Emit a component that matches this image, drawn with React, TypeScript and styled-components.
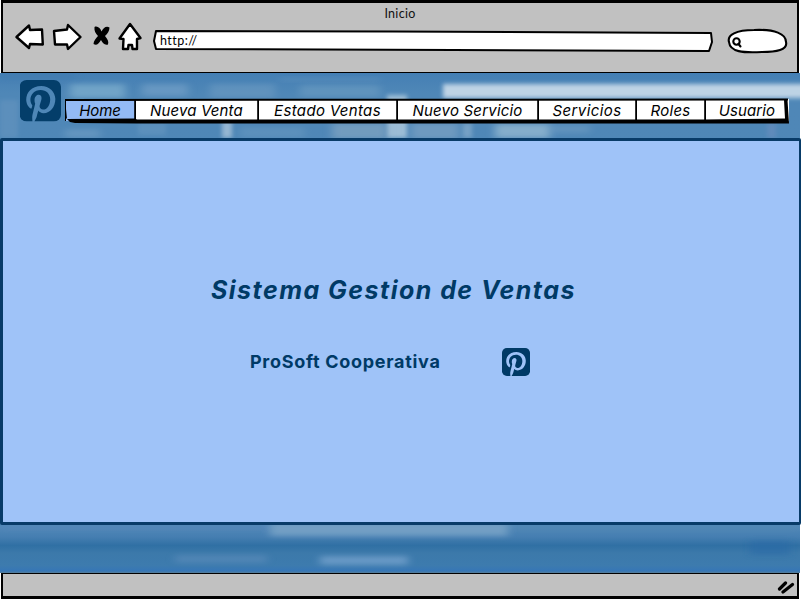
import React from "react";
import styled, { createGlobalStyle } from "styled-components";
import { FaPinterestSquare } from "react-icons/fa";

const navy = "#003a66";

const GlobalStyle = createGlobalStyle`
  * { box-sizing: border-box; }
  body { margin: 0; background: #fff; font-family: Lato, "Open Sans", sans-serif; overflow: hidden; }
`;

const Window = styled.div`
  width: 801px;
  height: 600px;
  display: flex;
  flex-direction: column;
  overflow: hidden;
`;

const Chrome = styled.header`
  flex: 0 0 73px;
  margin-right: 2px;
  margin-left: 1px;
  background: #c1c1c1;
  border: 2px solid #000;
  border-top-width: 3px;
  border-bottom-width: 1px;
  display: flex;
  flex-direction: column;
`;

const Title = styled.div`
  height: 22px;
  line-height: 21px;
  text-align: center;
  font-size: 12.5px;
  letter-spacing: 0.3px;
  color: #111;
`;

const Toolbar = styled.div`
  display: flex;
  align-items: flex-start;
  padding-left: 12px;
`;

const Controls = styled.svg`
  width: 130px;
  height: 32px;
  margin-top: -4px;
  fill: #fff;
  stroke: #000;
  stroke-width: 2.4;
  stroke-linejoin: round;
  stroke-linecap: round;
`;

const Address = styled.div`
  width: 560px;
  height: 24px;
  margin: 5px 0 0 8px;
  position: relative;
  padding-left: 7px;
  line-height: 22px;
  font-size: 12.5px;
  letter-spacing: 0.45px;
`;

const Outline = styled.svg`
  position: absolute;
  inset: 0;
  width: 100%;
  height: 100%;
  fill: #fff;
  stroke: #000;
  stroke-width: 2;
  stroke-linejoin: round;
`;

const Label = styled.span`
  position: relative;
`;

const Search = styled.svg`
  width: 62px;
  height: 26px;
  margin: 3px 0 0 14px;
  fill: #fff;
  stroke: #000;
  stroke-width: 2.1;
  stroke-linecap: round;
`;

const Page = styled.main`
  position: relative;
  flex: 0 0 500px;
  display: flex;
  flex-direction: column;
  overflow: hidden;
`;

const Photo = styled.svg`
  position: absolute;
  inset: 0;
  width: 800px;
  height: 100%;
`;

const Banner = styled.div`
  position: relative;
  height: 65px;
  display: flex;
  align-items: flex-start;
`;

const Logo = styled(FaPinterestSquare)<{ $size: number }>`
  flex: none;
  width: ${(p) => p.$size * 0.875}px;
  height: ${(p) => p.$size}px;
  clip-path: inset(6.25% 0 round ${(p) => p.$size * 0.15}px);
  color: ${navy};
`;

const BannerLogo = styled.div`
  width: 65px;
  height: 48px;
  margin-top: 4px;
  padding-left: 19.5px;
  opacity: 0.94;
`;

const Menu = styled.nav`
  position: relative;
  display: flex;
  width: 724px;
  height: 26px;
  margin-top: 25px;
`;

const MenuItem = styled.a<{ $width: number; $active?: boolean; $spacing: number }>`
  width: ${(p) => p.$width}px;
  height: 22px;
  margin-top: 1px;
  padding-right: 1px;
  border-left: 1px solid #000;
  background: ${(p) => (p.$active ? "#93baf5" : "#fff")};
  color: #000;
  text-align: center;
  font-family: Inter, sans-serif;
  font-size: 15px;
  font-style: italic;
  line-height: 23px;
  letter-spacing: ${(p) => p.$spacing}px;
  white-space: nowrap;
`;

const MenuStrokes = styled.svg`
  position: absolute;
  inset: 0;
  width: 724px;
  height: 26px;
  pointer-events: none;
`;

const Panel = styled.section`
  position: relative;
  height: 387px;
  background: #9fc3f8;
  border: 3px solid #083b68;
  border-width: 3px 2px 3px 3px;
  border-radius: 2px;
  display: flex;
  flex-direction: column;
`;

const Heading = styled.h1`
  margin: 131px 0 0 208px;
  height: 36px;
  line-height: 36px;
  font-family: Inter, sans-serif;
  font-size: 25px;
  font-weight: 700;
  font-style: italic;
  letter-spacing: 1.47px;
  white-space: nowrap;
  color: ${navy};
`;

const Company = styled.div`
  display: flex;
  align-items: center;
  margin: 38px 0 0 247px;
  height: 32px;
`;

const CompanyName = styled.h2`
  margin: -1px 0 0;
  width: 252px;
  font-family: Inter, sans-serif;
  font-size: 18px;
  font-weight: 700;
  letter-spacing: 0.7px;
  white-space: nowrap;
  color: ${navy};
`;

const StatusBar = styled.footer`
  flex: 0 0 26px;
  margin: 0 2px 0 1px;
  background: #c1c1c1;
  border: 2px solid #000;
  border-top-width: 1px;
  border-bottom-width: 3px;
  display: flex;
  justify-content: flex-end;
  align-items: center;
`;

const Grip = styled.svg`
  width: 18px;
  height: 14px;
  margin: 3px 2px 0 0;
  stroke: #000;
  stroke-width: 3.2;
  stroke-linecap: round;
`;

const items = [
  { label: "Home", width: 70, active: true, spacing: -0.1 },
  { label: "Nueva Venta", width: 123, spacing: 0.15 },
  { label: "Estado Ventas", width: 139, spacing: 0.35 },
  { label: "Nuevo Servicio", width: 141, spacing: 0.2 },
  { label: "Servicios", width: 98, spacing: 0.4 },
  { label: "Roles", width: 69, spacing: 0.3 },
  { label: "Usuario", width: 84, spacing: 0.1 },
];

// Soft light patches of the photo: x, y, width, height, colour, opacity.
const patches: [number, number, number, number, string, number][] = [
  [0, 0, 75, 7, "#3f79ae", 0.5],
  [70, 11, 55, 14, "#8dbcd5", 0.55],
  [142, 11, 46, 12, "#80a9cd", 0.5],
  [210, 11, 65, 14, "#7ba5c8", 0.4],
  [280, 5, 100, 3, "#75a0c5", 0.35],
  [300, 12, 80, 12, "#81acc9", 0.35],
  [387, 22, 20, 43, "#b8d0e1", 0.75],
  [0, 27, 18, 38, "#7ba3c8", 0.3],
  [65, 56, 35, 9, "#7ba6c9", 0.45],
  [138, 50, 28, 12, "#7ba6c9", 0.3],
  [222, 48, 10, 17, "#b4cadd", 0.7],
  [240, 54, 65, 11, "#76a3c6", 0.35],
  [332, 50, 55, 16, "#8aaac4", 0.6],
  [411, 50, 48, 16, "#8dacc8", 0.5],
  [463, 50, 9, 15, "#9dbbd4", 0.5],
  [495, 51, 55, 14, "#a9c8d9", 0.6],
  [550, 52, 40, 8, "#7da5c7", 0.4],
  [767, 50, 9, 15, "#718fbf", 0.5],
  [0, 452, 270, 5, "#5487ba", 0.8],
  [510, 452, 290, 5, "#5288b5", 0.8],
  [270, 450, 238, 13, "#8cb1cf", 0.6],
  [175, 482, 92, 8, "#6490be", 0.5],
  [320, 483, 88, 9, "#83acd5", 0.6],
  [750, 468, 40, 14, "#2868a6", 0.5],
];

export default function App() {
  return (
    <>
      <GlobalStyle />
      <Window>
        <Chrome>
          <Title>Inicio</Title>
          <Toolbar>
            <Controls viewBox="15 21 130 32">
              <path d="M16.5 37 29 25.5 30 30 42 29.5 42.8 44.5 30 44 29 48Z" />
              <path d="M54 31 67 29.5 68 25 80.5 37 68 49 67 44.5 55 44.5Z" />
              <path
                d="M94.5 27C97.5 25.5 100.5 28.5 101.5 31.5C103.5 27.5 106.5 25.5 109.5 27.5C109.5 31 107.5 34 105 36C107.5 39 109 41.5 108 44.5C104.5 45.5 102.5 43 101 40C98.5 44 96.5 46 93.5 44C93.5 41 96 38 98 36C95.5 33 94 31 94.5 27Z"
                fill="#000"
                stroke="none"
              />
              <path d="M119.5 38.5 130 24 140.5 38 137 39 137 49 132.5 49 132 45 128.5 45 128 49 123 49 123.5 39Z" />
            </Controls>
            <Address>
              <Outline viewBox="0 0 560 24">
                <path d="M3 1 240 1.5 558 3 559 12 556 21 300 20 3 19 1 11Z" />
              </Outline>
              <Label>http://</Label>
            </Address>
            <Search viewBox="727 28 62 26">
              <path d="M729 42C727 35 736 30 754 30C775 29 786 34 786 42C788 50 776 52 762 52C743 53 730 52 729 42Z" />
              <circle cx="736.5" cy="41.5" r="3.2" />
              <path d="M738.5 44 740.5 46.5" />
            </Search>
          </Toolbar>
        </Chrome>
        <Page>
          <Photo viewBox="0 0 800 500" preserveAspectRatio="none">
            <defs>
              <linearGradient id="sky" x2="0" y2="1">
                <stop offset="0" stopColor="#447fb4" />
                <stop offset=".04" stopColor="#4f87b7" />
                <stop offset=".91" stopColor="#4f86b6" />
                <stop offset=".928" stopColor="#457eb1" />
                <stop offset=".945" stopColor="#3070a4" />
                <stop offset=".96" stopColor="#3c79aa" />
                <stop offset=".985" stopColor="#3d7bae" />
                <stop offset=".996" stopColor="#3676b6" />
                <stop offset="1" stopColor="#567d98" />
              </linearGradient>
              <filter id="soft" x="-20%" y="-50%" width="140%" height="200%">
                <feGaussianBlur stdDeviation="4 2.5" />
              </filter>
              <filter id="crisp" x="-50%" y="-50%" width="200%" height="200%">
                <feGaussianBlur stdDeviation="2 2" />
              </filter>
            </defs>
            <rect width="800" height="500" fill="url(#sky)" />
            {patches.map(([x, y, w, h, fill, opacity], i) => (
              <rect key={i} x={x} y={y} width={w} height={h} fill={fill} opacity={opacity} filter={w < 30 ? "url(#crisp)" : "url(#soft)"} />
            ))}
            <rect x="443" y="11" width="370" height="14" fill="#cadceb" opacity=".9" filter="url(#crisp)" />
          </Photo>
          <Banner>
            <BannerLogo>
              <Logo $size={47.5} />
            </BannerLogo>
            <Menu>
              {items.map((item) => (
                <MenuItem key={item.label} $width={item.width} $active={item.active} $spacing={item.spacing}>
                  {item.label}
                </MenuItem>
              ))}
              <MenuStrokes viewBox="0 0 724 26">
                <path d="M0 2 723 1.5" stroke="#000" strokeWidth="2" />
                <path d="M70 2V23M193 2V23M332 2V23M473 2V23M571 2V23M640 2V23" stroke="#000" strokeWidth="1.6" />
                <path d="M0 1 2 21 70 20.5 72 21.5 640 21.5 720 20.5 719 2 722.5 2 724 25.5 72 25.5 10 25 5 24 0 19Z" />
              </MenuStrokes>
            </Menu>
          </Banner>
          <Panel>
            <Heading>Sistema Gestion de Ventas</Heading>
            <Company>
              <CompanyName>ProSoft Cooperativa</CompanyName>
              <Logo $size={32} />
            </Company>
          </Panel>
        </Page>
        <StatusBar>
          <Grip viewBox="0 0 18 14">
            <path d="M2.5 9 8.5 3M6 12 15.5 4.5" />
          </Grip>
        </StatusBar>
      </Window>
    </>
  );
}
